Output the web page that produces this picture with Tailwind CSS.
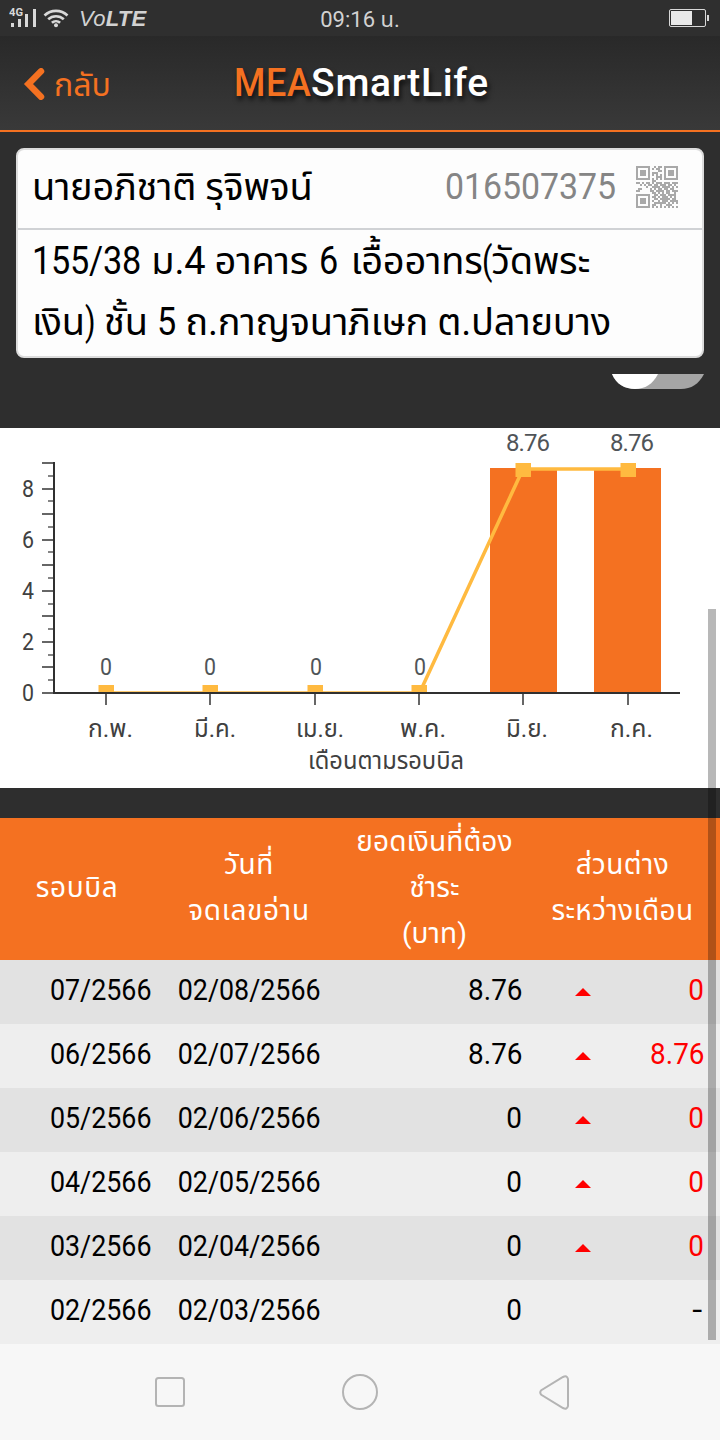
<!DOCTYPE html>
<html lang="th">
<head>
  <meta charset="UTF-8" />
  <meta name="viewport" content="width=device-width, initial-scale=1" />
  <title>MEA Smart Life</title>
  <script src="https://cdn.jsdelivr.net/npm/@tailwindcss/browser@4"></script>
  <style>
    body {
      font-family: Roboto, "Noto Sans Thai", "Noto Sans", sans-serif;
    }
  </style>
</head>
<body class="relative w-[720px] h-[1440px] overflow-hidden bg-[#2e2e2e] flex flex-col">
  <!-- Status bar -->
  <div class="h-9 shrink-0 grid grid-cols-3 items-center bg-[#2f2f2f] text-[#d2d2d2]">
    <div class="flex items-center pl-[9px]">
      <svg class="w-[28px] h-[20px]" viewBox="0 0 28 20" fill="#d8d8d8">
        <text x="0" y="8" font-size="10" font-weight="700" textLength="14" lengthAdjust="spacingAndGlyphs">4G</text>
        <rect x="2" y="15" width="3" height="4" />
        <rect x="9" y="11" width="3" height="8" />
        <rect x="16" y="6" width="3" height="13" />
        <rect x="24" y="1" width="3" height="18" />
      </svg>
      <svg class="w-[26px] h-[20px] ml-[6px]" viewBox="0 0 26 20" fill="none" stroke="#d8d8d8" stroke-width="2.6">
        <path d="M1.5 7.5a16.5 16.5 0 0 1 23 0M5.2 11.3a11.3 11.3 0 0 1 15.6 0M8.9 14.8a6 6 0 0 1 8.2 0" />
        <circle cx="13" cy="17.3" r="2" fill="#d8d8d8" stroke="none" />
      </svg>
      <span class="ml-[10px] text-[22px] italic leading-none mt-0.5 tracking-[0.3px] font-[Liberation_Sans]">Vo<b class="font-bold">LTE</b></span>
    </div>
    <div class="text-center text-[22px] leading-none mt-1">09:16 น.</div>
    <svg class="justify-self-end w-[41px] h-[18px] mr-[10px]" viewBox="0 0 41 18">
      <rect x="0.5" y="0.5" width="36" height="17" rx="1.5" fill="none" stroke="#d8d8d8" />
      <rect x="2" y="2" width="21" height="14" fill="#e9e9e9" />
      <rect x="38" y="6" width="2" height="6" fill="#d8d8d8" />
    </svg>
  </div>

  <!-- Header -->
  <header class="h-24 shrink-0 grid grid-cols-[1fr_258px_1fr] items-center border-b-2 border-[#f47121] bg-linear-to-b from-[#292929] to-[#393939]">
    <a class="flex items-center pl-[23px] pt-px text-[#f47121]">
      <svg class="w-[22px] h-8" viewBox="0 0 22 32" fill="none" stroke="#f47121" stroke-width="6.5" stroke-linecap="round" stroke-linejoin="miter">
        <path d="M18 3.3L5.5 16 18 28.7" />
      </svg>
      <span class="ml-[9px] pt-0.5 text-[32px] leading-none">กลับ</span>
    </a>
    <h1 class="pl-[3px] text-[39px] font-medium leading-none text-white whitespace-nowrap tracking-[0.7px] [text-shadow:2px_4px_5px_rgba(0,0,0,0.7)]"><span class="inline-block scale-x-[0.92] origin-left mr-[-7px] text-[#f47121]">MEA</span>SmartLife</h1>
  </header>

  <!-- Account card -->
  <section class="mx-4 mt-4 h-[210px] shrink-0 flex flex-col rounded-lg border-2 border-[#dcdcdc] bg-[#fdfdfd] text-black">
    <div class="h-20 flex items-center border-b-2 border-[#d0d2d5] pl-[14px] pr-6 pb-1">
      <span class="text-[38px] tracking-[-0.3px]">นายอภิชาติ รุจิพจน์</span>
      <span class="ml-auto text-[37px] text-[#858585] scale-x-[0.915] origin-right">016507375</span>
      <svg id="qr" class="ml-5 w-[42px] h-[42px]" viewBox="0 0 21 21" fill="#a9a9a9" shape-rendering="crispEdges"></svg>
    </div>
    <div class="pl-[14px] pt-px text-[38px] leading-[61px] tracking-[-0.22px] whitespace-nowrap">
      <div><span class="inline-block scale-x-[0.9] origin-left mr-[-11px]">155/38</span> ม.4 อาคาร <span class="inline-block scale-x-[0.9] origin-left mr-px ml-0.5">6</span> เอื้ออาทร<span class="inline-block scale-x-[0.8] origin-left mr-[-4px]">(</span>วัดพระ</div>
      <div>เงิน<span class="inline-block scale-x-[0.8] origin-left mr-[-3px]">)</span> ชั้น <span class="inline-block scale-x-[0.9] origin-left mr-[-2px]">5</span> ถ.กาญจนาภิเษก ต.ปลายบาง</div>
    </div>
  </section>

  <!-- Toggle, cut off by the scroll -->
  <div class="mt-4 h-[54px] shrink-0 flex justify-end items-start pr-4">
    <svg class="w-[92px] h-[15px]" viewBox="0 0 92 15">
      <path d="M0 0H92C87 10 79 15 69 15H23C13 15 4 10 0 0z" fill="#a5a5a5" />
      <path d="M0 0H46C41 10 33 15 23 15S4 10 0 0z" fill="#fff" />
    </svg>
  </div>

  <!-- Chart -->
  <svg id="chart" class="h-[360px] shrink-0 w-[720px] bg-white" viewBox="0 428 720 360" font-size="24"></svg>

  <!-- Bills -->
  <table class="mt-[30px] w-[720px] table-fixed border-collapse">
    <colgroup>
      <col class="w-[152px]" />
      <col class="w-[194px]" />
      <col class="w-[177px]" />
      <col class="w-[197px]" />
    </colgroup>
    <thead>
      <tr class="h-[142px] bg-[#f47121] text-[28px] leading-[46px] text-white text-center">
        <td class="pb-[3px] pl-0.5 tracking-[0.6px]">รอบบิล</td>
        <td class="pb-[3px] tracking-[0.7px]">วันที่<br />จดเลขอ่าน</td>
        <td class="pb-[3px] tracking-[0.1px]">ยอดเงินที่ต้อง<br />ชำระ<br />(บาท)</td>
        <td class="pb-[3px] pl-0.5 tracking-[0.4px]">ส่วนต่าง<br />ระหว่างเดือน</td>
      </tr>
    </thead>
    <tbody id="bills" class="text-[30px] leading-none text-right text-black"></tbody>
  </table>

  <!-- Navigation bar -->
  <nav class="h-24 shrink-0 grid grid-cols-[187px_auto_1fr] items-center bg-[#f7f7f7] pl-[155px] pr-[150px]">
    <svg class="w-[30px] h-[30px]" viewBox="0 0 30 30" fill="none" stroke="#b4b4b4" stroke-width="2"><rect x="1" y="1" width="28" height="28" rx="2.5" /></svg>
    <svg class="w-9 h-9" viewBox="0 0 36 36" fill="none" stroke="#b4b4b4" stroke-width="2"><circle cx="18" cy="18" r="17" /></svg>
    <svg class="w-[31px] h-[35px] justify-self-end" viewBox="0 0 31 35" fill="none" stroke="#b4b4b4" stroke-width="2"><path d="M2.3 15.2Q.2 17.5 2.3 19.8L24 33Q28 35 29 31V4Q28 0 24 2z" /></svg>
  </nav>

  <!-- Scrollbar -->
  <div class="absolute left-[708px] top-[609px] w-2 h-[731px] bg-black/28"></div>

  <script>
    const qr = [
      '111111100101101111111',
      '100000101011001000001',
      '101110100001101011101',
      '101110101110001011101',
      '101110101010101011101',
      '100000100011101000001',
      '111111101010101111111',
      '000000001100000000000',
      '110101101011101110111',
      '001010110110111011010',
      '000001001111011110101',
      '011000010101101101100',
      '110000011011110110111',
      '000000001101010110010',
      '111111100110111011110',
      '100000101101011101010',
      '101110100110111110110',
      '101110101001011101111',
      '101110100111111010101',
      '100000101100100111000',
      '111111101010101010101'
    ];
    let cells = '';
    qr.forEach((row, y) => [...row].forEach((c, x) => {
      if (c === '1') cells += `<rect x="${x}" y="${y}" width="1" height="1" />`;
    }));
    document.getElementById('qr').innerHTML = cells;

    const bills = [
      ['07/2566', '02/08/2566', '8.76', '0'],
      ['06/2566', '02/07/2566', '8.76', '8.76'],
      ['05/2566', '02/06/2566', '0', '0'],
      ['04/2566', '02/05/2566', '0', '0'],
      ['03/2566', '02/04/2566', '0', '0'],
      ['02/2566', '02/03/2566', '0', '-']
    ];
    document.getElementById('bills').innerHTML = bills.map(([cycle, date, amount, diff]) => `
      <tr class="h-16 odd:bg-[#e2e2e2] even:bg-[#eeeeee]">
        <td class="pb-1"><span class="inline-block scale-x-[0.895] origin-right">${cycle}</span></td>
        <td class="pb-1 pr-[25px]"><span class="inline-block scale-x-[0.895] origin-right">${date}</span></td>
        <td class="pb-1 pr-px"><span class="inline-block scale-x-[0.93] origin-right">${amount}</span></td>
        <td class="pb-1 pr-4 pl-[52px]">
          <div class="flex items-center justify-between ${diff === '-' ? '' : 'text-[#ff0000]'}">
            <svg class="w-4 h-2 mt-1" viewBox="0 0 16 8"><path d="${diff === '-' ? '' : 'M0 8L8 0l8 8z'}" fill="currentColor" /></svg>
            <span class="inline-block ${diff === '-' ? 'scale-x-[1.2] mr-0.5' : 'scale-x-[0.93]'} origin-right">${diff}</span>
          </div>
        </td>
      </tr>`).join('');

    const months = [
      ['ก.พ.', 0, 106, 88, 45], ['มี.ค.', 0, 210, 194, 42], ['เม.ย.', 0, 315, 296, 48],
      ['พ.ค.', 0, 419, 400, 46], ['มิ.ย.', 8.76, 523, 506, 42], ['ก.ค.', 8.76, 628, 610, 43]
    ];
    let out = '';
    for (let i = 0; i <= 18; i++) {
      const y = Math.round(693 - i * 12.78);
      out += `<path d="M${i % 2 ? 48 : 42} ${y}H54" stroke="#666" stroke-width="${i % 2 ? 1.6 : 2}" />`;
      if (i % 4 === 0) out += `<text x="22" y="${y + 8}" fill="#404040" textLength="12" lengthAdjust="spacingAndGlyphs">${i / 2}</text>`;
    }
    months.forEach(([name, value, x, labelX, labelW]) => {
      if (value) out += `<rect x="${x > 600 ? 594 : 490}" y="468" width="67" height="225" fill="#f47121" />`;
      out += `<path d="M${x} 693V705" stroke="#666" stroke-width="2" />`;
      out += `<text x="${labelX}" y="737" fill="#404040" textLength="${labelW}" lengthAdjust="spacingAndGlyphs">${name}</text>`;
    });
    // clipped at the baseline so the flat part stays a hairline
    out += '<clipPath id="plot"><rect x="54" y="428" width="626" height="265" /></clipPath>';
    out += '<path d="M106 693H419.5L523 469H628" fill="none" stroke="#ffba40" stroke-width="3.5" clip-path="url(#plot)" />';
    months.forEach(([, value, x]) => {
      out += `<rect x="${x - 7.5}" y="${value ? 463 : 685}" width="15.5" height="${value ? 14 : 8}" fill="#ffba40" />`;
      // value labels sit slightly right of the first columns
      const zeroX = x > 300 ? x - 5 : x - 6;
      out += value
        ? `<text x="${x > 600 ? 610 : 506}" y="451" fill="#505458" textLength="44">${value}</text>`
        : `<text x="${zeroX}" y="675" fill="#505458" textLength="12" lengthAdjust="spacingAndGlyphs">0</text>`;
    });
    out += '<path d="M54 462V693H680" fill="none" stroke="#303030" stroke-width="2" />';
    out += '<text x="308" y="769" fill="#404040" textLength="156" lengthAdjust="spacingAndGlyphs">เดือนตามรอบบิล</text>';
    document.getElementById('chart').innerHTML = out;
  </script>
</body>
</html>
